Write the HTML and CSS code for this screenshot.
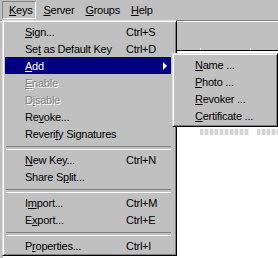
FILE: index.html
```html
<!DOCTYPE html>
<html lang="en">
<head>
    <meta charset="UTF-8">
    <title>Keys</title>
    <link rel="stylesheet" href="styles.css">
</head>
<body>
    <div class="window">
        <div class="menubar">
            <div class="menubar-item open"><u>K</u>eys</div>
            <div class="menubar-item"><u>S</u>erver</div>
            <div class="menubar-item"><u>G</u>roups</div>
            <div class="menubar-item"><u>H</u>elp</div>
        </div>

        <div class="toolbar"></div>
        <div class="header-edge">
            <span class="tick tick-1"></span>
            <span class="tick tick-2"></span>
        </div>
        <div class="listview">
            <div class="list-row">
                <span class="ghost ghost-1"></span>
                <span class="ghost ghost-2"></span>
            </div>
        </div>

        <div class="menu keys-menu">
            <div class="item"><span class="label"><u>S</u>ign...</span><span class="shortcut">Ctrl+S</span></div>
            <div class="item"><span class="label">Se<u>t</u> as Default Key</span><span class="shortcut">Ctrl+D</span></div>
            <div class="item active"><span class="label"><u>A</u>dd</span><span class="arrow"></span></div>
            <div class="item disabled"><span class="label"><u>E</u>nable</span></div>
            <div class="item disabled"><span class="label">D<u>i</u>sable</span></div>
            <div class="item"><span class="label">Re<u>v</u>oke...</span></div>
            <div class="item"><span class="label">Reveri<u>f</u>y Signatures</span></div>
            <div class="separator"></div>
            <div class="item"><span class="label"><u>N</u>ew Key...</span><span class="shortcut">Ctrl+N</span></div>
            <div class="item"><span class="label">Share S<u>p</u>lit...</span></div>
            <div class="separator"></div>
            <div class="item"><span class="label">I<u>m</u>port...</span><span class="shortcut">Ctrl+M</span></div>
            <div class="item"><span class="label">E<u>x</u>port...</span><span class="shortcut">Ctrl+E</span></div>
            <div class="separator"></div>
            <div class="item"><span class="label">P<u>r</u>operties...</span><span class="shortcut">Ctrl+I</span></div>
        </div>

        <div class="menu add-menu">
            <div class="item"><span class="label"><u>N</u>ame ...</span></div>
            <div class="item"><span class="label"><u>P</u>hoto ...</span></div>
            <div class="item"><span class="label"><u>R</u>evoker ...</span></div>
            <div class="item"><span class="label"><u>C</u>ertificate ...</span></div>
        </div>
    </div>
</body>
</html>
```

FILE: styles.css
```css
* {
    margin: 0;
    padding: 0;
    box-sizing: border-box;
}

body {
    font-family: "Liberation Sans", Arial, sans-serif;
    font-size: 11px;
    letter-spacing: -0.25px;
    background: #c0c0c0;
    color: #000;
    width: 278px;
    height: 258px;
    overflow: hidden;
}

u {
    text-decoration: underline;
    text-underline-offset: 1px;
}

.window {
    position: relative;
    height: 258px;
}

/* menu bar */
.menubar {
    display: flex;
    height: 20px;
    padding: 1px 2px 0;
}

.menubar-item {
    height: 18px;
    line-height: 16px;
    padding: 0 3px 0 6px;
    border: 1px solid transparent;
}

.menubar-item.open {
    border-color: #808080 #fff #fff #808080;
}

/* window content behind the menus */
.toolbar {
    height: 28px;
    border-top: 1px solid #808080;
    box-shadow: inset 0 1px #fff;
}

.header-edge {
    position: relative;
    height: 2px;
}

.tick {
    position: absolute;
    top: 0;
    width: 1px;
    height: 2px;
    background: #fff;
}

.tick-1 { left: 200px; }
.tick-2 { left: 250px; }

.listview {
    height: 208px;
    margin-left: 3px;
    background: #fff;
    border-top: 1px solid #000;
    padding-top: 78px;
}

.list-row {
    display: flex;
    gap: 8px;
    padding-left: 197px;
}

.ghost {
    height: 6px;
    background: repeating-linear-gradient(90deg, #d4d4d4 0 3px, #eee 3px 5px);
}

.ghost-1 { width: 50px; }
.ghost-2 { width: 22px; }

/* popup menus */
.menu {
    position: absolute;
    background: #c0c0c0;
    border: 1px solid;
    border-color: #dfdfdf #000 #000 #dfdfdf;
    box-shadow: inset 1px 1px #fff, inset -1px -1px #808080;
}

.keys-menu {
    left: 2px;
    top: 20px;
    width: 175px;
    padding: 2px 5px 1px 2px;
}

.add-menu {
    left: 172px;
    top: 53px;
    width: 106px;
    padding: 2px;
}

.item {
    display: flex;
    align-items: center;
    height: 17px;
    padding-left: 20px;
    white-space: nowrap;
}

.keys-menu .label {
    width: 101px;
}

.item.active {
    background: #000080;
    color: #fff;
}

.item.disabled {
    color: #808080;
    text-shadow: 1px 1px 0 #fff;
}

.arrow {
    margin-left: auto;
    margin-right: 4px;
    width: 0;
    height: 0;
    border-left: 4px solid currentColor;
    border-top: 4px solid transparent;
    border-bottom: 4px solid transparent;
}

.separator {
    height: 9px;
    padding: 4px 0 0 1px;
}

.separator::after {
    content: "";
    display: block;
    height: 2px;
    border-top: 1px solid #808080;
    border-bottom: 1px solid #fff;
}
```
